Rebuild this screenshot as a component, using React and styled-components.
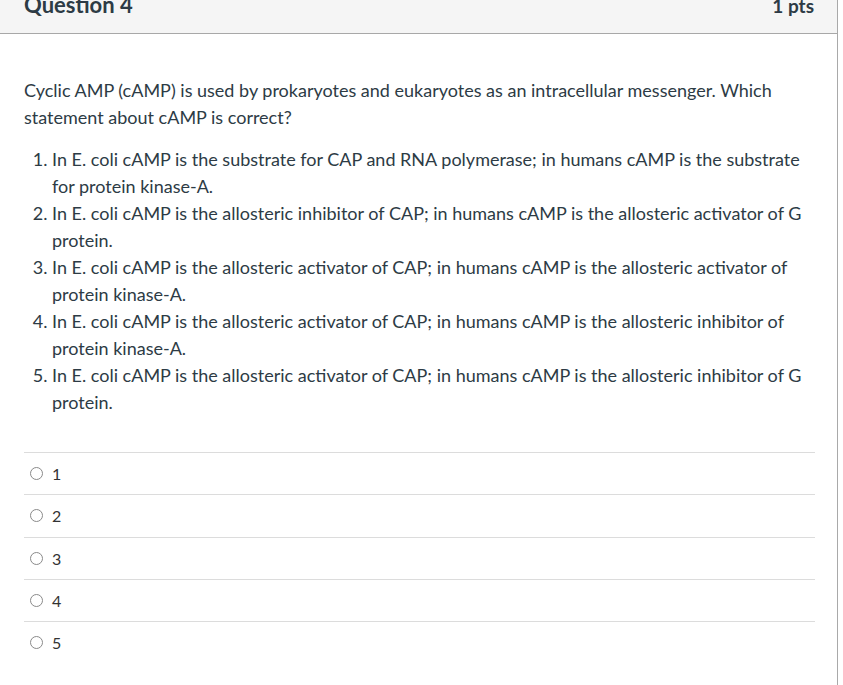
import React from 'react'
import styled, { createGlobalStyle } from 'styled-components'

const GlobalStyle = createGlobalStyle`
  body {
    margin: 0;
    background: #ffffff;
    font-family: Lato, "Open Sans", sans-serif;
    color: #2d3b45;
    overflow: hidden;
  }
`

const Card = styled.div`
  width: 837px;
  margin: -22px 0 0 -1px;
  border: 1px solid #a9a9a9;
  background: #fff;
`

const Header = styled.div`
  display: flex;
  justify-content: space-between;
  align-items: baseline;
  padding: 9px 23px 11px 24px;
  line-height: 33px;
  background: #f5f5f5;
  border-bottom: 1px solid #a8a8a8;
`

const Title = styled.span`
  font-size: 22px;
  font-weight: 700;
  color: #2d3b45;
`

const Points = styled.span`
  font-size: 19px;
  font-weight: 700;
  color: #2d3b45;
`

const Body = styled.div`
  padding: 43px 22px 22px 24px;
  font-size: 18px;
  line-height: 27px;
`

const Prompt = styled.p`
  margin: 0 0 15px;
`

const Choices = styled.ol`
  margin: 0;
  padding-left: 28px;
`

const Answers = styled.div`
  margin-top: 36px;
`

const AnswerRow = styled.label`
  display: flex;
  align-items: center;
  gap: 9px;
  height: 41.3px;
  padding-left: 6px;
  border-top: 1px solid #dcdcdc;
  font-size: 16px;
  color: #333;
`

const Radio = styled.span`
  width: 11px;
  height: 11px;
  border-radius: 50%;
  border: 1px solid #8a8a8a;
  background: #fff;
`

const statements = [
  'In E. coli cAMP is the substrate for CAP and RNA polymerase; in humans cAMP is the substrate for protein kinase-A.',
  'In E. coli cAMP is the allosteric inhibitor of CAP; in humans cAMP is the allosteric activator of G protein.',
  'In E. coli cAMP is the allosteric activator of CAP; in humans cAMP is the allosteric activator of protein kinase-A.',
  'In E. coli cAMP is the allosteric activator of CAP; in humans cAMP is the allosteric inhibitor of protein kinase-A.',
  'In E. coli cAMP is the allosteric activator of CAP; in humans cAMP is the allosteric inhibitor of G protein.',
]

export default function App() {
  return (
    <>
      <GlobalStyle />
      <Card>
        <Header>
          <Title>Question 4</Title>
          <Points>1 pts</Points>
        </Header>
        <Body>
          <Prompt>
            Cyclic AMP (cAMP) is used by prokaryotes and eukaryotes as an intracellular messenger. Which
            statement about cAMP is correct?
          </Prompt>
          <Choices>
            {statements.map((s) => (
              <li key={s}>{s}</li>
            ))}
          </Choices>
          <Answers>
            {[1, 2, 3, 4, 5].map((n) => (
              <AnswerRow key={n}>
                <Radio />
                {n}
              </AnswerRow>
            ))}
          </Answers>
        </Body>
      </Card>
    </>
  )
}
